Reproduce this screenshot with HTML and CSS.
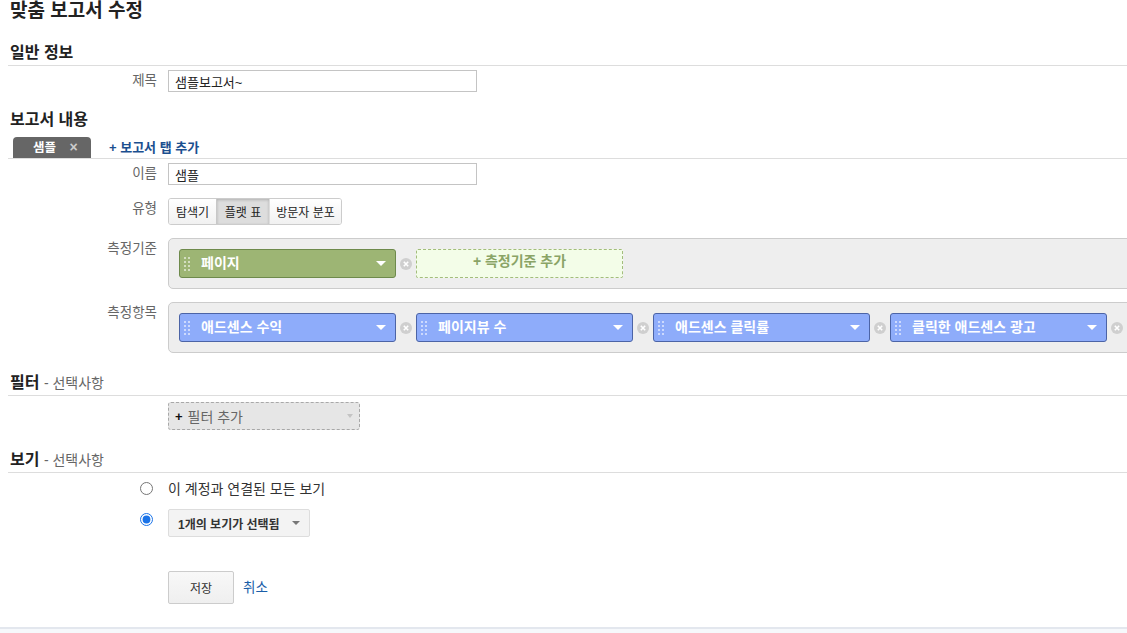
FILE: index.html
```html
<!DOCTYPE html>
<html lang="ko">
<head>
    <meta charset="UTF-8">
    <title>맞춤 보고서 수정</title>
    <link rel="stylesheet" href="styles.css">
</head>
<body>
    <div class="page">
        <h1 class="page-title">맞춤 보고서 수정</h1>

        <h2 class="section-title first">일반 정보</h2>
        <div class="row row-title">
            <label class="row-label">제목</label>
            <div class="row-field">
                <input type="text" class="text-input" value="샘플보고서~">
            </div>
        </div>

        <h2 class="section-title no-line">보고서 내용</h2>
        <div class="tab-bar">
            <div class="tab">샘플 <span class="tab-close">×</span></div>
            <a class="add-tab">+ 보고서 탭 추가</a>
        </div>

        <div class="row row-name">
            <label class="row-label">이름</label>
            <div class="row-field">
                <input type="text" class="text-input" value="샘플">
            </div>
        </div>

        <div class="row row-gap">
            <label class="row-label">유형</label>
            <div class="row-field">
                <div class="btn-group">
                    <button class="seg-btn explorer">탐색기</button>
                    <button class="seg-btn flat active">플랫 표</button>
                    <button class="seg-btn overlay">방문자 분포</button>
                </div>
            </div>
        </div>

        <div class="row row-gap">
            <label class="row-label">측정기준</label>
            <div class="row-field">
                <div class="pill-box">
                    <div class="pill green">
                        <svg class="grip" width="6" height="14" viewBox="0 0 6 14"><path d="M0 0h2v2H0zM4 0h2v2H4zM0 4h2v2H0zM4 4h2v2H4zM0 8h2v2H0zM4 8h2v2H4zM0 12h2v2H0zM4 12h2v2H4z" fill="#fff" fill-opacity="0.55"/></svg>
                        <span class="pill-text">페이지</span>
                        <span class="caret"></span>
                    </div>
                    <span class="remove"><svg width="12" height="12" viewBox="0 0 12 12"><circle cx="6" cy="6" r="6" fill="#cfcfcf"/><path d="M3.8 3.8l4.4 4.4M8.2 3.8l-4.4 4.4" stroke="#fff" stroke-width="1.6"/></svg></span>
                    <div class="add-dim">+ 측정기준 추가</div>
                </div>
            </div>
        </div>

        <div class="row row-gap">
            <label class="row-label">측정항목</label>
            <div class="row-field">
                <div class="pill-box">
                    <div class="pill blue">
                        <svg class="grip" width="6" height="14" viewBox="0 0 6 14"><path d="M0 0h2v2H0zM4 0h2v2H4zM0 4h2v2H0zM4 4h2v2H4zM0 8h2v2H0zM4 8h2v2H4zM0 12h2v2H0zM4 12h2v2H4z" fill="#fff" fill-opacity="0.55"/></svg>
                        <span class="pill-text">애드센스 수익</span>
                        <span class="caret"></span>
                    </div>
                    <span class="remove"><svg width="12" height="12" viewBox="0 0 12 12"><circle cx="6" cy="6" r="6" fill="#cfcfcf"/><path d="M3.8 3.8l4.4 4.4M8.2 3.8l-4.4 4.4" stroke="#fff" stroke-width="1.6"/></svg></span>
                    <div class="pill blue">
                        <svg class="grip" width="6" height="14" viewBox="0 0 6 14"><path d="M0 0h2v2H0zM4 0h2v2H4zM0 4h2v2H0zM4 4h2v2H4zM0 8h2v2H0zM4 8h2v2H4zM0 12h2v2H0zM4 12h2v2H4z" fill="#fff" fill-opacity="0.55"/></svg>
                        <span class="pill-text">페이지뷰 수</span>
                        <span class="caret"></span>
                    </div>
                    <span class="remove"><svg width="12" height="12" viewBox="0 0 12 12"><circle cx="6" cy="6" r="6" fill="#cfcfcf"/><path d="M3.8 3.8l4.4 4.4M8.2 3.8l-4.4 4.4" stroke="#fff" stroke-width="1.6"/></svg></span>
                    <div class="pill blue">
                        <svg class="grip" width="6" height="14" viewBox="0 0 6 14"><path d="M0 0h2v2H0zM4 0h2v2H4zM0 4h2v2H0zM4 4h2v2H4zM0 8h2v2H0zM4 8h2v2H4zM0 12h2v2H0zM4 12h2v2H4z" fill="#fff" fill-opacity="0.55"/></svg>
                        <span class="pill-text">애드센스 클릭률</span>
                        <span class="caret"></span>
                    </div>
                    <span class="remove"><svg width="12" height="12" viewBox="0 0 12 12"><circle cx="6" cy="6" r="6" fill="#cfcfcf"/><path d="M3.8 3.8l4.4 4.4M8.2 3.8l-4.4 4.4" stroke="#fff" stroke-width="1.6"/></svg></span>
                    <div class="pill blue">
                        <svg class="grip" width="6" height="14" viewBox="0 0 6 14"><path d="M0 0h2v2H0zM4 0h2v2H4zM0 4h2v2H0zM4 4h2v2H4zM0 8h2v2H0zM4 8h2v2H4zM0 12h2v2H0zM4 12h2v2H4z" fill="#fff" fill-opacity="0.55"/></svg>
                        <span class="pill-text">클릭한 애드센스 광고</span>
                        <span class="caret"></span>
                    </div>
                    <span class="remove"><svg width="12" height="12" viewBox="0 0 12 12"><circle cx="6" cy="6" r="6" fill="#cfcfcf"/><path d="M3.8 3.8l4.4 4.4M8.2 3.8l-4.4 4.4" stroke="#fff" stroke-width="1.6"/></svg></span>
                </div>
            </div>
        </div>

        <h2 class="section-title filter-title">필터 <span class="optional">- 선택사항</span></h2>
        <div class="row row-filter">
            <div class="row-label"></div>
            <div class="row-field">
                <div class="filter-add"><b>+</b> 필터 추가 <span class="caret grey"></span></div>
            </div>
        </div>

        <h2 class="section-title view-title">보기 <span class="optional">- 선택사항</span></h2>
        <div class="row row-radio">
            <div class="row-label"><input type="radio" name="view" class="radio"></div>
            <div class="row-field radio-text">이 계정과 연결된 모든 보기</div>
        </div>
        <div class="row row-radio2">
            <div class="row-label"><input type="radio" name="view" class="radio" checked></div>
            <div class="row-field">
                <button class="view-select">1개의 보기가 선택됨 <span class="caret dark"></span></button>
            </div>
        </div>

        <div class="row row-actions">
            <div class="row-label"></div>
            <div class="row-field actions">
                <button class="save-btn">저장</button>
                <a class="cancel-link">취소</a>
            </div>
        </div>
    </div>
    <div class="footer"></div>
</body>
</html>
```

FILE: styles.css
```css
* {
    margin: 0;
    padding: 0;
    box-sizing: border-box;
}

html,
body {
    overflow: hidden;
}

body {
    font-family: 'Liberation Sans', Arial, 'Noto Sans CJK KR', sans-serif;
    color: #333;
    background-color: #ffffff;
    font-size: 13px;
}

.page {
    padding-left: 8px;
}

.page-title {
    font-size: 19px;
    font-weight: bold;
    line-height: 22px;
    height: 22px;
    color: #222;
    padding-left: 2px;
}

.section-title {
    font-size: 16px;
    font-weight: bold;
    line-height: 20px;
    height: 23px;
    color: #222;
    padding: 0 2px;
    border-bottom: 1px solid #dddddd;
    overflow: hidden;
}

.section-title.first {
    margin-top: 21px;
}

.section-title.no-line {
    border-bottom: none;
    margin-top: 18px;
    height: 20px;
}

.section-title.filter-title {
    margin-top: 20px;
}

.section-title.view-title {
    margin-top: 20px;
}

.optional {
    font-size: 14px;
    font-weight: normal;
    color: #666;
    vertical-align: top;
}

.row {
    display: flex;
    gap: 11px;
}

.row-label {
    width: 149px;
    flex-shrink: 0;
    text-align: right;
    line-height: 22px;
    color: #666;
    font-size: 13.5px;
}

.row-field {
    flex: 1;
    min-width: 0;
}

.row-title {
    margin-top: 4px;
}

.row-name {
    margin-top: 4px;
}

.row-gap {
    margin-top: 13px;
}

.text-input {
    display: block;
    width: 309px;
    height: 22px;
    border: 1px solid #c4c4c4;
    padding: 0 6px;
    font-family: inherit;
    font-size: 13px;
    color: #222;
    outline: none;
}

/* tabs */
.tab-bar {
    margin-top: 7px;
    height: 22px;
    border-bottom: 1px solid #dddddd;
    display: flex;
    align-items: flex-end;
    padding-left: 5px;
}

.tab {
    width: 78px;
    height: 21px;
    background-color: #666666;
    border-radius: 4px 4px 0 0;
    color: #ffffff;
    font-size: 12.5px;
    font-weight: bold;
    line-height: 21px;
    padding-left: 20px;
}

.tab-close {
    color: #cccccc;
    margin-left: 10px;
    font-size: 14px;
}

.add-tab {
    color: #1b4f8f;
    font-size: 13px;
    font-weight: bold;
    line-height: 20px;
    margin-left: 18px;
    cursor: pointer;
}

/* segmented buttons */
.btn-group {
    display: inline-flex;
    border: 1px solid #cccccc;
    border-radius: 3px;
    overflow: hidden;
    height: 27px;
}

.seg-btn {
    font-family: inherit;
    font-size: 12px;
    color: #222;
    background: linear-gradient(#ffffff, #f1f1f1);
    border: none;
    border-left: 1px solid #dddddd;
    height: 25px;
    text-align: center;
}

.seg-btn:first-child {
    border-left: none;
}

.seg-btn.explorer {
    width: 47px;
}

.seg-btn.flat {
    width: 53px;
}

.seg-btn.overlay {
    width: 72px;
}

.seg-btn.active {
    background: #dddddd;
    box-shadow: inset 0 1px 3px rgba(0, 0, 0, 0.2);
    border-left-color: #c8c8c8;
}

/* dimension / metric boxes */
.pill-box {
    width: 1000px;
    height: 51px;
    background-color: #eeeeee;
    border: 1px solid #cccccc;
    border-radius: 5px;
    padding: 10px;
    display: flex;
    align-items: center;
}

.pill {
    width: 217px;
    height: 29px;
    border-radius: 3px;
    border: 1px solid;
    display: flex;
    align-items: center;
    padding: 0 9px 0 4px;
    color: #ffffff;
    font-size: 14px;
    font-weight: bold;
    flex-shrink: 0;
}

.pill.green {
    background-color: #9db574;
    border-color: #6e8a4c;
}

.pill.blue {
    background-color: #8eacfa;
    border-color: #4c64a6;
}

.grip {
    flex-shrink: 0;
    margin-right: 11px;
}

.pill-text {
    flex: 1;
    margin-top: -3px;
}

.caret {
    width: 0;
    height: 0;
    border-left: 5px solid transparent;
    border-right: 5px solid transparent;
    border-top: 5px solid #ffffff;
}

.caret.grey {
    border-top-color: #c4c4c4;
    border-left-width: 3px;
    border-right-width: 3px;
    border-top-width: 4px;
}

.caret.dark {
    border-top-color: #777777;
    border-left-width: 4px;
    border-right-width: 4px;
    border-top-width: 4px;
    margin-left: 12px;
}

.remove {
    width: 20px;
    display: flex;
    justify-content: center;
    flex-shrink: 0;
}

.add-dim {
    width: 207px;
    height: 29px;
    flex-shrink: 0;
    background-color: #f3fde8;
    border: 1px dashed #a3bd7c;
    border-radius: 2px;
    color: #8aa466;
    font-size: 14px;
    font-weight: bold;
    text-align: center;
    line-height: 22px;
}

/* filter */
.row-filter {
    margin-top: 6px;
}

.filter-add {
    width: 192px;
    height: 28px;
    background-color: #e6e6e6;
    border: 1px dashed #a8a8a8;
    border-radius: 3px;
    display: flex;
    align-items: center;
    padding: 0 6px 0 6px;
    color: #666;
    font-size: 14px;
    gap: 5px;
}

.filter-add b {
    color: #111;
    font-size: 13px;
}

.filter-add .caret {
    margin-left: auto;
}

/* views */
.row-radio {
    margin-top: 5px;
    height: 22px;
}

.row-radio2 {
    margin-top: 9px;
    height: 28px;
}

.row-radio .row-label,
.row-radio2 .row-label {
    display: flex;
    justify-content: flex-end;
    align-items: flex-start;
}

.radio {
    display: block;
    width: 13px;
    height: 13px;
    margin: 4px 4px 0 0;
    accent-color: #1a73e8;
}

.radio-text {
    line-height: 22px;
    color: #333;
    font-size: 14px;
}

.view-select {
    height: 28px;
    padding: 0 9px;
    background-color: #f3f3f3;
    border: 1px solid #dddddd;
    border-radius: 2px;
    font-family: inherit;
    font-size: 12px;
    font-weight: bold;
    color: #333;
    display: inline-flex;
    align-items: center;
}

/* actions */
.row-actions {
    margin-top: 34px;
}

.actions {
    display: flex;
    align-items: center;
    gap: 9px;
}

.save-btn {
    width: 66px;
    height: 33px;
    background: linear-gradient(#f8f8f8, #efefef);
    border: 1px solid #cccccc;
    border-radius: 2px;
    font-family: inherit;
    font-size: 12px;
    color: #333;
}

.cancel-link {
    color: #1a5ea8;
    font-size: 13.5px;
    cursor: pointer;
    margin-top: -3px;
}

.footer {
    margin-top: 23px;
    height: 40px;
    border-top: 2px solid #e3e7ee;
    background-color: #f6f8fb;
}
```
